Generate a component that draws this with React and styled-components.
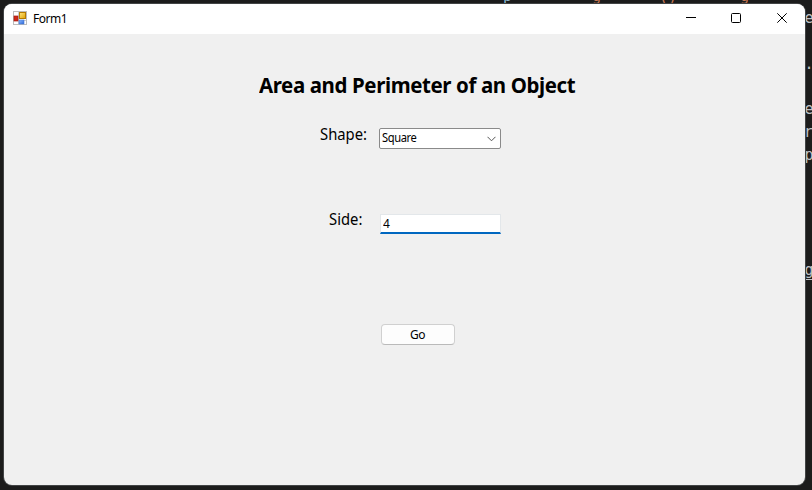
import React from 'react';
import styled, { createGlobalStyle } from 'styled-components';

const GlobalStyle = createGlobalStyle`
  *, *::before, *::after { box-sizing: border-box; }
  body { margin: 0; background: #1c1c1c; overflow: hidden; }
`;

const Desktop = styled.div`
  position: relative;
  width: 812px;
  height: 490px;
  padding: 4px 7px 5px 4px;
  overflow: hidden;
  background: #1c1c1c;
  font-family: 'Noto Sans', 'Open Sans', sans-serif;
`;

const EditorText = styled.span`
  position: absolute;
  left: ${(p) => p.$x}px;
  top: ${(p) => p.$y}px;
  font: 15px/20px 'DejaVu Sans Mono', monospace;
  color: ${(p) => p.$color || '#c0c3c6'};
  text-decoration: ${(p) => (p.$underlined ? 'underline' : 'none')};
  text-underline-offset: 4px;
  white-space: pre;
`;

const Window = styled.main`
  position: relative;
  display: flex;
  flex-direction: column;
  width: 801px;
  height: 481px;
  border-radius: 8px;
  overflow: hidden;
  background: #f0f0f0;
  color: #000;
`;

const WindowEdge = styled.div`
  position: absolute;
  inset: 3px 6px 4px 3px;
  border-radius: 9px;
  background: #424445;
`;

const TitleBar = styled.header`
  display: flex;
  align-items: center;
  height: 30px;
  padding-left: 9px;
  background: #fff;
`;

const AppIcon = styled.svg`
  display: block;
  width: 14px;
  height: 14px;
  margin-right: 6px;
  margin-top: -2px;
`;

const Caption = styled.span`
  flex: 1;
  font-size: 12px;
  line-height: 16px;
  letter-spacing: -0.45px;
`;

const CaptionButton = styled.button`
  display: flex;
  align-items: center;
  justify-content: center;
  width: ${(p) => p.$width || 45}px;
  height: 30px;
  padding: 0 0 2px;
  border: 0;
  background: transparent;
`;

const Glyph = styled.svg`
  display: block;
  flex: none;
  fill: none;
  stroke: ${(p) => p.$color || '#000'};
`;

const Form = styled.form`
  display: flex;
  flex-direction: column;
`;

const Heading = styled.h1`
  width: 330px;
  margin: 36px 0 0 255px;
  font-size: 21.33px;
  line-height: 30px;
  font-weight: 700;
  letter-spacing: -0.4px;
  white-space: nowrap;
  transform: scaleX(0.959);
  transform-origin: left;
`;

const Field = styled.div`
  display: flex;
  height: 24px;
  margin-top: ${(p) => p.$gap}px;
  padding-left: ${(p) => p.$indent}px;
`;

const Label = styled.label`
  width: ${(p) => p.$width}px;
  margin-top: ${(p) => p.$lift || 0}px;
  font-size: 16px;
  line-height: 20px;
  white-space: nowrap;
  transform: scaleX(0.925);
  transform-origin: left;
`;

const Select = styled.div`
  display: flex;
  align-items: center;
  justify-content: space-between;
  width: 122px;
  height: 21px;
  margin-top: 4px;
  padding: 0 4px 0 2px;
  border: 1px solid #8a8a8a;
  border-radius: 2px;
  background: #fff;
  font-size: 12px;
  line-height: 18px;
`;

const SelectValue = styled.span`
  letter-spacing: -0.45px;
  transform: translateY(-1px) scaleX(0.93);
  transform-origin: left;
`;

const Input = styled.input`
  width: 121px;
  height: 20px;
  margin-top: 4px;
  padding: 0 2px;
  border: 1px solid #e3e7ea;
  border-bottom: 2px solid #0067c0;
  border-radius: 0;
  outline: 0;
  background: #fff;
  color: #000;
  font: 12px/16px 'Noto Sans', sans-serif;
`;

const Button = styled.button`
  width: 74px;
  height: 21px;
  margin: 90px 0 0 377px;
  padding: 0 1px 0 0;
  border: 1px solid #d0d0d0;
  border-bottom-color: #bababa;
  border-radius: 4px;
  background: #fdfdfd;
  color: #000;
  font: 12px/18px 'Noto Sans', sans-serif;
  letter-spacing: -0.4px;
`;

const editorFragments = [
  { text: 'p', x: 503, y: -14, color: '#8db5d0' },
  { text: 'g', x: 592, y: -14, color: '#c77755' },
  { text: '()', x: 659, y: -13, color: '#c77755' },
  { text: 'g', x: 740, y: -14, color: '#c77755' },
  { text: 'e', x: 804.5, y: 8 },
  { text: '.', x: 804.5, y: 54 },
  { text: 'e', x: 804.5, y: 99 },
  { text: 'r', x: 804, y: 122 },
  { text: 'p', x: 804.5, y: 145 },
  { text: 'g', x: 804.5, y: 260, underlined: true },
];

function FormIcon() {
  return (
    <AppIcon viewBox="0 0 14 14" aria-hidden="true">
      <defs>
        <linearGradient id="gold" x1="0" y1="0" x2="1" y2="1">
          <stop offset="0" stopColor="#ffe680" />
          <stop offset="1" stopColor="#dfa000" />
        </linearGradient>
        <linearGradient id="blue" x1="0" y1="0" x2="1" y2="1">
          <stop offset="0" stopColor="#8fbcff" />
          <stop offset="1" stopColor="#2b66d8" />
        </linearGradient>
      </defs>
      <rect x=".5" y=".5" width="13" height="13" fill="#fff" stroke="#bcbcbc" />
      <path d="M5.5 1v12M1 9.5h12" stroke="#d0d0d0" />
      <rect x="6.5" y="1.5" width="6" height="6" fill="url(#gold)" stroke="#b57a00" />
      <rect x="1" y="5" width="4" height="5" fill="#cf2818" stroke="#a51b13" strokeWidth=".7" />
      <rect x="6" y="9" width="5" height="4" fill="url(#blue)" stroke="#477bd2" strokeWidth=".6" />
    </AppIcon>
  );
}

export default function App() {
  return (
    <Desktop>
      <GlobalStyle />
      {editorFragments.map(({ text, x, y, color, underlined }) => (
        <EditorText key={`${x}-${y}`} $x={x} $y={y} $color={color} $underlined={underlined}>
          {text}
        </EditorText>
      ))}
      <WindowEdge />
      <Window>
        <TitleBar>
          <FormIcon />
          <Caption>Form1</Caption>
          <CaptionButton type="button" aria-label="Minimize">
            <Glyph width="10" height="10"><path d="M0 4.5h10" /></Glyph>
          </CaptionButton>
          <CaptionButton type="button" aria-label="Maximize">
            <Glyph width="10" height="10"><rect x=".5" y=".5" width="9" height="9" rx="1" /></Glyph>
          </CaptionButton>
          <CaptionButton type="button" aria-label="Close" $width={47}>
            <Glyph width="10" height="10"><path d="M.3.3l9.4 9.4M9.7.3L.3 9.7" /></Glyph>
          </CaptionButton>
        </TitleBar>
        <Form>
          <Heading>Area and Perimeter of an Object</Heading>
          <Field $gap={24} $indent={316}>
            <Label $width={59}>Shape:</Label>
            <Select role="combobox" aria-label="Shape" aria-expanded="false">
              <SelectValue>Square</SelectValue>
              <Glyph width="9" height="6" $color="#555"><path d="M.5.8l4 4 4-4" /></Glyph>
            </Select>
          </Field>
          <Field $gap={62} $indent={325}>
            <Label $width={51} $lift={-1} htmlFor="side">Side:</Label>
            <Input id="side" defaultValue="4" />
          </Field>
          <Button type="button">Go</Button>
        </Form>
      </Window>
    </Desktop>
  );
}
